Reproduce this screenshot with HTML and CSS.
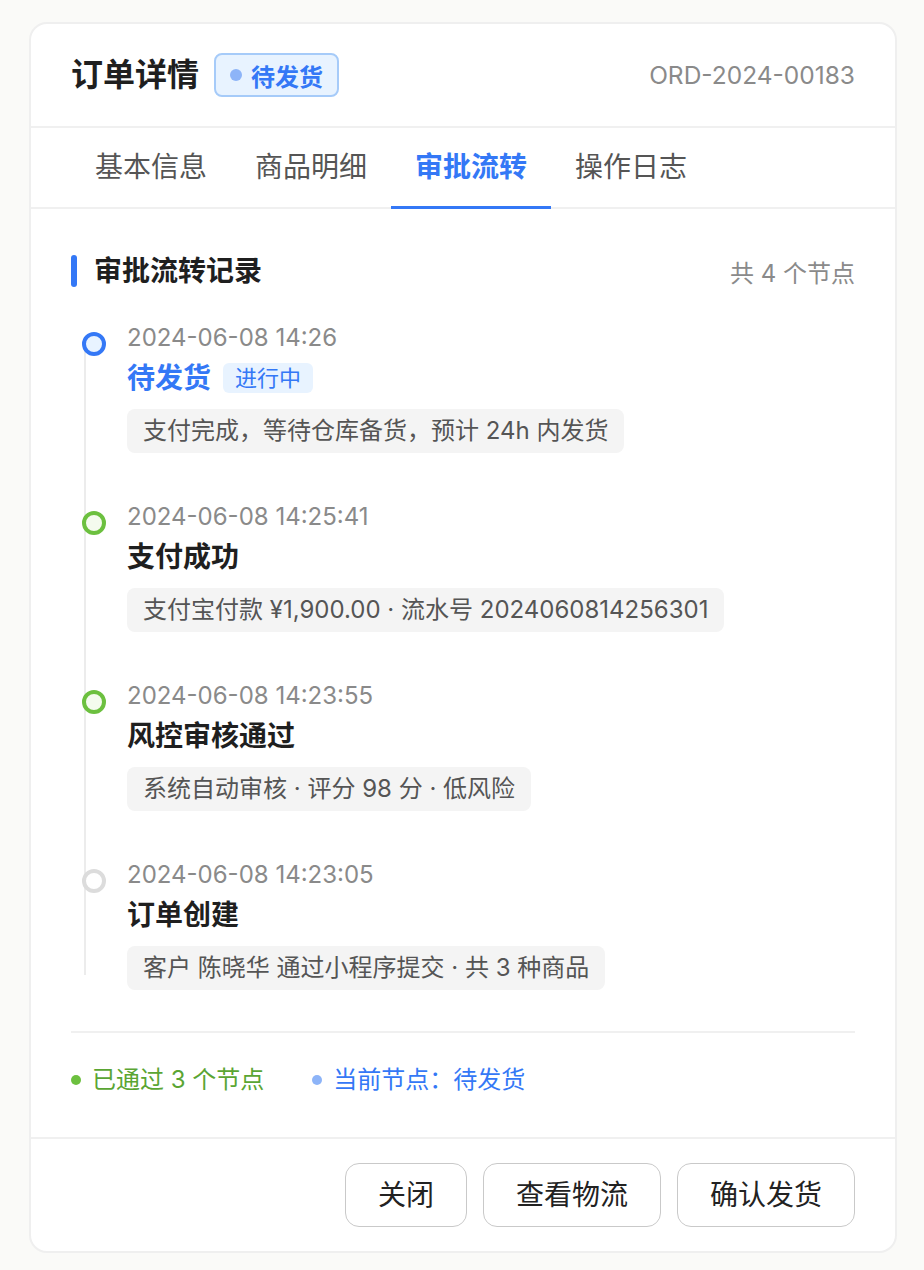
FILE: index.html
```html
<!DOCTYPE html>
<html lang="zh-CN">
<head>
<meta charset="utf-8">
<title>订单详情</title>
<link rel="stylesheet" href="styles.css">
</head>
<body>
<div class="card">
  <header class="card-head">
    <div class="head-left">
      <h1 class="title">订单详情</h1>
      <span class="badge"><i class="badge-dot"></i>待发货</span>
    </div>
    <span class="order-no">ORD-2024-00183</span>
  </header>
  <nav class="tabs">
    <a class="tab">基本信息</a>
    <a class="tab">商品明细</a>
    <a class="tab tab-active">审批流转</a>
    <a class="tab">操作日志</a>
  </nav>
  <section class="content">
    <div class="sec-head">
      <h2 class="sec-title"><span class="sec-bar"></span>审批流转记录</h2>
      <span class="sec-count">共 4 个节点</span>
    </div>
    <ol class="timeline">
      <li class="node node-current">
        <span class="dot"></span>
        <div class="time">2024-06-08 14:26</div>
        <div class="node-title"><span>待发货</span><span class="tag">进行中</span></div>
        <div class="desc">支付完成，等待仓库备货，预计 24h 内发货</div>
      </li>
      <li class="node node-done">
        <span class="dot"></span>
        <div class="time">2024-06-08 14:25:41</div>
        <div class="node-title"><span>支付成功</span></div>
        <div class="desc">支付宝付款 ¥1,900.00 · 流水号 2024060814256301</div>
      </li>
      <li class="node node-done">
        <span class="dot"></span>
        <div class="time">2024-06-08 14:23:55</div>
        <div class="node-title"><span>风控审核通过</span></div>
        <div class="desc">系统自动审核 · 评分 98 分 · 低风险</div>
      </li>
      <li class="node node-start">
        <span class="dot"></span>
        <div class="time">2024-06-08 14:23:05</div>
        <div class="node-title"><span>订单创建</span></div>
        <div class="desc">客户 陈晓华 通过小程序提交 · 共 3 种商品</div>
      </li>
    </ol>
    <div class="stats">
      <span class="stat stat-pass"><i class="stat-dot"></i>已通过 3 个节点</span>
      <span class="stat stat-current"><i class="stat-dot"></i>当前节点：待发货</span>
    </div>
  </section>
  <footer class="actions">
    <button class="btn">关闭</button>
    <button class="btn">查看物流</button>
    <button class="btn">确认发货</button>
  </footer>
</div>
</body>
</html>
```
FILE: styles.css
```css
body {
  margin: 0;
  background: #fafaf8;
  font-family: Inter, "Noto Sans CJK SC", sans-serif;
  color: #1f1f1f;
}

.card {
  width: 868px;
  box-sizing: border-box;
  margin: 22px 27px 0 29px;
  background: #fff;
  border: 2px solid #efefef;
  border-radius: 18px;
  overflow: hidden;
}

.card-head {
  display: flex;
  justify-content: space-between;
  align-items: center;
  padding: 29px 40px;
  border-bottom: 2px solid #f0f0f0;
}

.head-left {
  display: flex;
  align-items: center;
  gap: 15px;
}

.title {
  margin: 0;
  font-size: 32px;
  line-height: 44px;
  font-weight: 700;
  color: #1f1f1f;
}

.badge {
  display: inline-flex;
  align-items: center;
  gap: 9px;
  box-sizing: border-box;
  height: 44px;
  padding: 0 14px;
  border: 2px solid #a6cbf9;
  border-radius: 8px;
  background: #e8f3ff;
  color: #3478f6;
  font-size: 24px;
  font-weight: 600;
}

.badge-dot {
  width: 12px;
  height: 12px;
  border-radius: 50%;
  background: #8db4f8;
}

.order-no {
  font-size: 24.5px;
  color: #8a8a8a;
}

.tabs {
  display: flex;
  padding: 0 40px;
  border-bottom: 2px solid #f0f0f0;
}

.tab {
  padding: 19px 24px;
  font-size: 28px;
  line-height: 40px;
  color: #555;
  border-bottom: 3px solid transparent;
  margin-bottom: -2px;
}

.tab-active {
  color: #3478f6;
  font-weight: 600;
  border-bottom-color: #3478f6;
}

.content {
  padding: 46px 40px 40px;
}

.sec-head {
  display: flex;
  justify-content: space-between;
  align-items: center;
  height: 32px;
  margin-bottom: 33px;
}

.sec-title {
  margin: 0;
  display: flex;
  align-items: center;
  font-size: 28px;
  line-height: 32px;
  font-weight: 600;
  color: #1f1f1f;
}

.sec-bar {
  width: 6px;
  height: 32px;
  border-radius: 3px;
  background: #3478f6;
  margin-right: 17px;
}

.sec-count {
  font-size: 24px;
  color: #8a8a8a;
}

.timeline {
  list-style: none;
  margin: 0;
  padding: 0;
  position: relative;
}

.timeline::before {
  content: "";
  position: absolute;
  left: 13px;
  top: 24px;
  bottom: 15px;
  width: 2px;
  background: #ececec;
}

.node {
  position: relative;
  padding: 0 0 46px 56px;
}

.node:last-child {
  padding-bottom: 0;
}

.dot {
  position: absolute;
  left: 11px;
  top: 12px;
  width: 24px;
  height: 24px;
  box-sizing: border-box;
  border: 4px solid #ddd;
  border-radius: 50%;
  background: #fff;
  z-index: 1;
}

.node-current .dot {
  border-color: #3478f6;
  background: #e8f3ff;
}

.node-done .dot {
  border-color: #6cc03f;
  background: #f4fbee;
}

.node-start .dot {
  border-color: #dcdcdc;
  background: #fff;
}

.time {
  font-size: 24px;
  line-height: 36px;
  color: #8a8a8a;
}

.node-title {
  margin-top: 2px;
  display: flex;
  align-items: center;
  gap: 12px;
  font-size: 28px;
  line-height: 40px;
  font-weight: 600;
  color: #1f1f1f;
}

.node-current .node-title {
  color: #3478f6;
}

.tag {
  font-size: 22px;
  line-height: 30px;
  padding: 0 12px;
  border-radius: 6px;
  background: #e8f3ff;
  color: #3478f6;
  font-weight: 400;
}

.desc {
  margin-top: 11px;
  width: fit-content;
  padding: 6px 16px;
  font-size: 24px;
  line-height: 32px;
  color: #555;
  background: #f4f4f4;
  border-radius: 8px;
}

.stats {
  margin-top: 41px;
  border-top: 2px solid #f0f0f0;
  padding-top: 30px;
  display: flex;
  gap: 48px;
  font-size: 24px;
  line-height: 34px;
}

.stat {
  display: flex;
  align-items: center;
  gap: 11px;
}

.stat-dot {
  width: 10px;
  height: 10px;
  border-radius: 50%;
}

.stat-pass {
  color: #5aa533;
}

.stat-pass .stat-dot {
  background: #6cc03f;
}

.stat-current {
  color: #3478f6;
}

.stat-current .stat-dot {
  background: #8db4f8;
}

.actions {
  display: flex;
  justify-content: flex-end;
  gap: 16px;
  padding: 24px 40px;
  border-top: 2px solid #f0f0f0;
}

.btn {
  padding: 11px 32px;
  font-family: inherit;
  font-size: 28px;
  line-height: 40px;
  color: #222;
  background: #fff;
  border: 1px solid #c9c9c9;
  border-radius: 14px;
}
```
